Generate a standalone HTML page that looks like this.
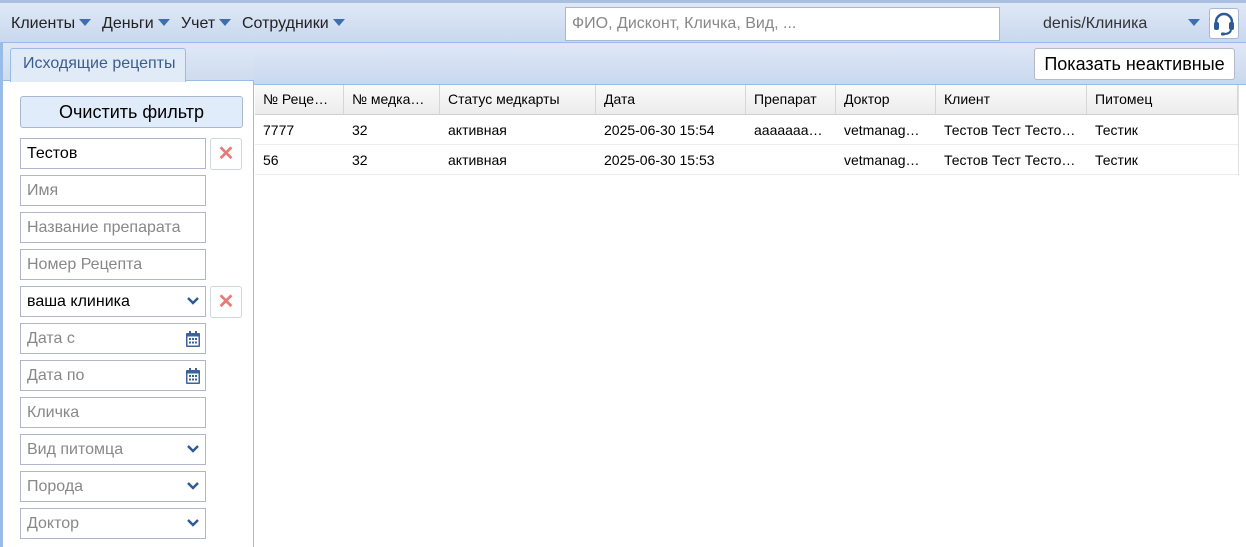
<!DOCTYPE html>
<html><head><meta charset="utf-8"><style>
*{box-sizing:border-box;margin:0;padding:0}
body{width:1246px;height:547px;overflow:hidden;background:#fff;font-family:"Liberation Sans",sans-serif;position:relative;color:#000}
.abs{position:absolute}
#top{left:0;top:0;width:1246px;height:43px;background:linear-gradient(#dfe8f6,#c9d8ee);border-top:3px solid #a8bfdf;border-bottom:1px solid #99bbe8}
.menu{top:15px;font-size:16px;color:#222}
.tri{display:inline-block;width:0;height:0;border-left:6px solid transparent;border-right:6px solid transparent;border-top:7px solid #3d6eae;margin-left:4px;vertical-align:2px}
#search{left:565px;top:7px;width:435px;height:34px;background:#fff;border:1px solid #a8b8d0;font-size:16px;color:#888;padding:7px 6px}
#left{left:0;top:43px;width:254px;height:504px;border-left:3px solid #99bbe8;border-right:1px solid #99bbe8;background:#fff}
#tabstrip{left:3px;top:43px;width:251px;height:38px;background:linear-gradient(#dfe8f6,#cfdcef);border-bottom:1px solid #99bbe8}
#tab{left:10px;top:48px;width:176px;height:34px;background:#e1ebf8;border:1px solid #99bbe8;border-bottom:none;border-radius:3px 3px 0 0;font-size:16px;color:#3b5d8c;padding:6px 0 0 12px}
#right{left:254px;top:43px;width:992px;height:42px;background:linear-gradient(#dfe8f6,#c9d8ee);border-bottom:1px solid #99bbe8}
.btn{background:#fff;border:1px solid #b5b8c8;border-radius:3px;font-size:18px;text-align:center}
#clr{left:20px;top:96px;width:223px;height:32px;background:#e1ecfa;border:1px solid #a9b8cf;border-radius:3px;font-size:18px;text-align:center;padding-top:5px}
.inp{left:20px;width:186px;height:31px;border:1px solid #b1b5cc;font-size:16px;color:#888;padding:6px 6px;background:#fff}
.inp.v{color:#000}
.x{left:210px;width:32px;height:32px;border:1px solid #d0d4dc;border-radius:3px;color:#e87a7a;font-size:20px;text-align:center;line-height:30px;font-weight:bold}
.chev{position:absolute;right:6px;top:9px}
.cal{position:absolute;right:5px;top:7px}
#grid{left:255px;top:85px;width:983px}
.hd{height:30px;background:linear-gradient(#fafafa,#ececec);border-bottom:1px solid #d0d0d0;display:flex;font-size:14px}
.hd div{border-right:1px solid #d6d6d6;padding:6px 8px;white-space:nowrap;overflow:hidden}
.row{height:30px;border-bottom:1px solid #ececec;display:flex;font-size:14px}
.row div{padding:7px 8px;white-space:nowrap;overflow:hidden}
</style></head><body>
<div id="top" class="abs"></div>
<div class="abs menu" style="left:11px">Клиенты<span class="tri"></span></div>
<div class="abs menu" style="left:102px">Деньги<span class="tri"></span></div>
<div class="abs menu" style="left:181px">Учет<span class="tri"></span></div>
<div class="abs menu" style="left:242px">Сотрудники<span class="tri"></span></div>
<div id="search" class="abs">ФИО, Дисконт, Кличка, Вид, ...</div>
<div class="abs menu" style="left:1043px;color:#333">denis/Клиника</div>
<div class="abs" style="left:1188px;top:19px;width:0;height:0;border-left:6px solid transparent;border-right:6px solid transparent;border-top:7px solid #3d6eae"></div>
<div class="abs" style="left:1209px;top:8px;width:30px;height:31px;background:#fff;border:1px solid #a8b8d0;border-radius:3px">
<svg width="28" height="29" viewBox="0 0 28 29"><path d="M6 17 V13 A8 8 0 0 1 22 13 V17" fill="none" stroke="#2d5a94" stroke-width="2.5"/><rect x="4" y="13" width="5" height="8" rx="2" fill="#2d5a94"/><rect x="19" y="13" width="5" height="8" rx="2" fill="#2d5a94"/><path d="M21 21 Q20 25 14 25" fill="none" stroke="#2d5a94" stroke-width="2"/><rect x="11" y="23.5" width="4" height="3" rx="1" fill="#2d5a94"/></svg></div>
<div id="left" class="abs"></div>
<div id="tabstrip" class="abs"></div>
<div id="tab" class="abs">Исходящие рецепты</div>
<div id="right" class="abs"></div>
<div class="abs btn" style="left:1034px;top:48px;width:201px;height:32px;padding-top:5px">Показать неактивные</div>
<div id="clr" class="abs">Очистить фильтр</div>
<div class="abs inp v" style="top:138px">Тестов</div>
<div class="abs x" style="top:138px">✕</div>
<div class="abs inp" style="top:175px">Имя</div>
<div class="abs inp" style="top:212px">Название препарата</div>
<div class="abs inp" style="top:249px">Номер Рецепта</div>
<div class="abs inp v" style="top:286px">ваша клиника<svg class="chev" width="12" height="10"><path d="M1 2 L6 7 L11 2" fill="none" stroke="#2d5a94" stroke-width="2.4"/></svg></div>
<div class="abs x" style="top:286px">✕</div>
<div class="abs inp" style="top:323px">Дата с<svg class="cal" width="14" height="16" viewBox="0 0 14 16"><rect x="0" y="2" width="14" height="14" rx="1" fill="#3c6399"/><rect x="3" y="0" width="2" height="4" fill="#3c6399"/><rect x="9" y="0" width="2" height="4" fill="#3c6399"/><rect x="1.5" y="5.5" width="11" height="9" fill="#fff"/><g fill="#3c6399"><rect x="3" y="7" width="2" height="2"/><rect x="6" y="7" width="2" height="2"/><rect x="9" y="7" width="2" height="2"/><rect x="3" y="10.5" width="2" height="2"/><rect x="6" y="10.5" width="2" height="2"/><rect x="9" y="10.5" width="2" height="2"/></g></svg></div>
<div class="abs inp" style="top:360px">Дата по<svg class="cal" width="14" height="16" viewBox="0 0 14 16"><rect x="0" y="2" width="14" height="14" rx="1" fill="#3c6399"/><rect x="3" y="0" width="2" height="4" fill="#3c6399"/><rect x="9" y="0" width="2" height="4" fill="#3c6399"/><rect x="1.5" y="5.5" width="11" height="9" fill="#fff"/><g fill="#3c6399"><rect x="3" y="7" width="2" height="2"/><rect x="6" y="7" width="2" height="2"/><rect x="9" y="7" width="2" height="2"/><rect x="3" y="10.5" width="2" height="2"/><rect x="6" y="10.5" width="2" height="2"/><rect x="9" y="10.5" width="2" height="2"/></g></svg></div>
<div class="abs inp" style="top:397px">Кличка</div>
<div class="abs inp" style="top:434px">Вид питомца<svg class="chev" width="12" height="10"><path d="M1 2 L6 7 L11 2" fill="none" stroke="#2d5a94" stroke-width="2.4"/></svg></div>
<div class="abs inp" style="top:471px">Порода<svg class="chev" width="12" height="10"><path d="M1 2 L6 7 L11 2" fill="none" stroke="#2d5a94" stroke-width="2.4"/></svg></div>
<div class="abs inp" style="top:508px">Доктор<svg class="chev" width="12" height="10"><path d="M1 2 L6 7 L11 2" fill="none" stroke="#2d5a94" stroke-width="2.4"/></svg></div>
<div id="grid" class="abs">
<div class="hd"><div style="width:89px">№ Реце…</div><div style="width:96px">№ медка…</div><div style="width:156px">Статус медкарты</div><div style="width:150px">Дата</div><div style="width:90px">Препарат</div><div style="width:100px">Доктор</div><div style="width:151px">Клиент</div><div style="width:151px">Питомец</div></div>
<div class="row"><div style="width:89px">7777</div><div style="width:96px">32</div><div style="width:156px">активная</div><div style="width:150px">2025-06-30 15:54</div><div style="width:90px">ааааааа…</div><div style="width:100px">vetmanag…</div><div style="width:151px">Тестов Тест Тесто…</div><div style="width:151px">Тестик</div></div>
<div class="row"><div style="width:89px">56</div><div style="width:96px">32</div><div style="width:156px">активная</div><div style="width:150px">2025-06-30 15:53</div><div style="width:90px"></div><div style="width:100px">vetmanag…</div><div style="width:151px">Тестов Тест Тесто…</div><div style="width:151px">Тестик</div></div>
</div>
<div class="abs" style="left:1238px;top:85px;width:1px;height:90px;background:#e0e0e0"></div>
</body></html>
